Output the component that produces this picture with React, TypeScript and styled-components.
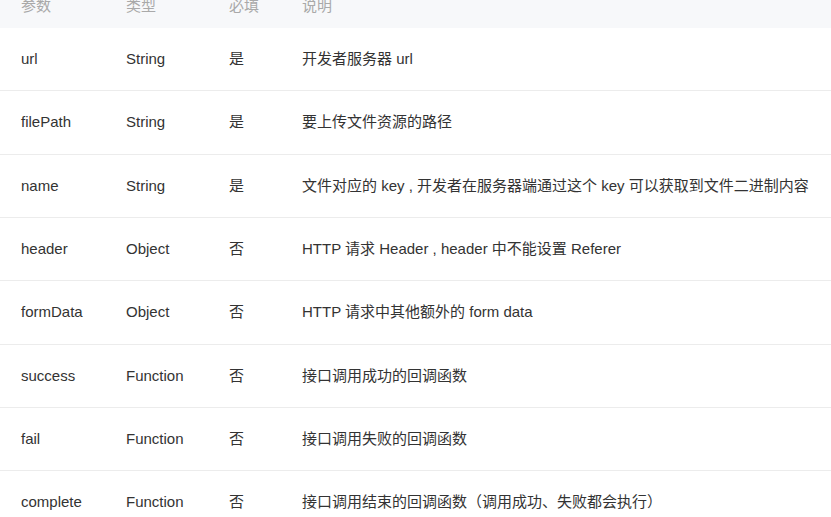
import React from "react";
import styled, { createGlobalStyle } from "styled-components";

const Global = createGlobalStyle`
  html, body { margin: 0; padding: 0; background: #fff; overflow: hidden; }
  body { font-family: "Liberation Sans", "Noto Sans CJK SC", sans-serif; }
`;

const Table = styled.div`
  width: 831px;
  display: flex;
  flex-direction: column;
`;

const Row = styled.div<{ $head?: boolean }>`
  display: grid;
  grid-template-columns: 105px 103px 73px 1fr;
  align-items: center;
  padding-left: 21px;
  box-sizing: border-box;
  flex: none;
  height: ${(p) => (p.$head ? "44px" : "63.33px")};
  margin-top: ${(p) => (p.$head ? "-16px" : "0")};
  background: ${(p) => (p.$head ? "#f7f8fa" : "#fff")};
  border-bottom: ${(p) => (p.$head ? "none" : "1px solid #ececec")};
  font-size: 15px;
  color: ${(p) => (p.$head ? "#a9a9a9" : "#333")};
`;

const Cell = styled.div`
  white-space: nowrap;
  line-height: 20px;
`;

const rows: [string, string, string, string][] = [
  ["url", "String", "是", "开发者服务器 url"],
  ["filePath", "String", "是", "要上传文件资源的路径"],
  ["name", "String", "是", "文件对应的 key , 开发者在服务器端通过这个 key 可以获取到文件二进制内容"],
  ["header", "Object", "否", "HTTP 请求 Header , header 中不能设置 Referer"],
  ["formData", "Object", "否", "HTTP 请求中其他额外的 form data"],
  ["success", "Function", "否", "接口调用成功的回调函数"],
  ["fail", "Function", "否", "接口调用失败的回调函数"],
  ["complete", "Function", "否", "接口调用结束的回调函数（调用成功、失败都会执行）"],
];

export default function App() {
  return (
    <>
      <Global />
      <Table>
        <Row $head>
          <Cell>参数</Cell>
          <Cell>类型</Cell>
          <Cell>必填</Cell>
          <Cell>说明</Cell>
        </Row>
        {rows.map((r) => (
          <Row key={r[0]}>
            {r.map((c, i) => (
              <Cell key={i}>{c}</Cell>
            ))}
          </Row>
        ))}
      </Table>
    </>
  );
}
